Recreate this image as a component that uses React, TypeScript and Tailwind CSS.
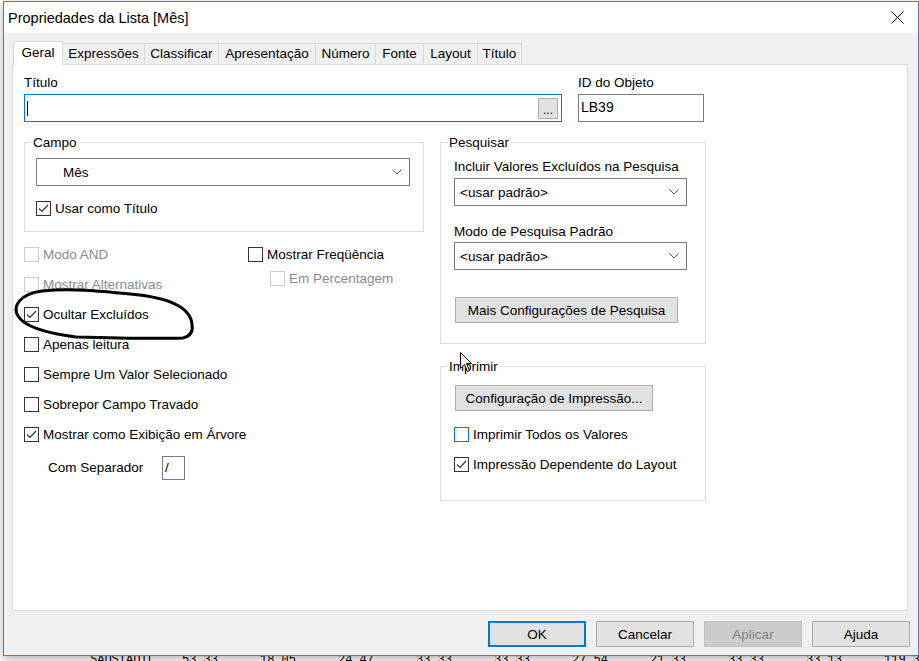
import React from "react";

const font = { fontFamily: '"Liberation Sans", Arial, sans-serif' };

const tabs = [
  { label: "Geral", w: "w-[50px]", active: true },
  { label: "Expressões", w: "w-[82px]" },
  { label: "Classificar", w: "w-[74px]" },
  { label: "Apresentação", w: "w-[97px]" },
  { label: "Número", w: "w-[60px]" },
  { label: "Fonte", w: "w-[48px]" },
  { label: "Layout", w: "w-[54px]" },
  { label: "Título", w: "w-[44px]" },
];

const desktopNumbers = ["53.33", "18.05", "24.47", "33.33", "33.33", "27.54", "21.33", "33.33", "33.13", "119.35"];

function Check({ checked, disabled, focus }: { checked?: boolean; disabled?: boolean; focus?: boolean }) {
  const border = disabled ? "border-[#cccccc]" : focus ? "border-[#0078d7]" : "border-[#333333]";
  return (
    <span className={`w-[15px] h-[15px] shrink-0 border bg-white flex items-center justify-center ${border}`}>
      {checked && (
        <svg width="13" height="13" viewBox="0 0 13 13">
          <polyline points="2,6.5 5,9.5 11,3" fill="none" stroke="#333" strokeWidth="1.2" />
        </svg>
      )}
    </span>
  );
}

function CheckRow({
  label,
  checked,
  disabled,
  focus,
  className = "",
}: {
  label: string;
  checked?: boolean;
  disabled?: boolean;
  focus?: boolean;
  className?: string;
}) {
  return (
    <div className={`flex items-center gap-[4px] ${className}`}>
      <Check checked={checked} disabled={disabled} focus={focus} />
      <span
        className={`leading-[16px] whitespace-nowrap translate-y-[1px] ${disabled ? "text-[#8a8a8a]" : "text-black"}`}
      >
        {label}
      </span>
    </div>
  );
}

function Combo({ value, className = "" }: { value: string; className?: string }) {
  return (
    <div className={`h-[28px] border border-[#7a7a7a] bg-white flex items-center justify-between pr-[7px] ${className}`}>
      <span className="leading-[16px] translate-y-[1px]">{value}</span>
      <svg width="10" height="6" viewBox="0 0 10 6">
        <polyline points="0.5,0.5 5,5 9.5,0.5" fill="none" stroke="#606060" strokeWidth="1" />
      </svg>
    </div>
  );
}

function WinButton({ label, className = "" }: { label: string; className?: string }) {
  return (
    <button className={`h-[26px] bg-[#e1e1e1] border border-[#adadad] text-black leading-[16px] ${className}`}>
      <span className="inline-block translate-y-[1px]">{label}</span>
    </button>
  );
}

function Group({ title, className = "", children }: { title: string; className?: string; children: React.ReactNode }) {
  return (
    <fieldset className={`border border-[#dcdcdc] ${className}`}>
      <legend className="ml-[6px] px-[2px] leading-[16px]">
        <span className="inline-block translate-y-[1px]">{title}</span>
      </legend>
      {children}
    </fieldset>
  );
}

export default function App() {
  return (
    <div className="relative w-[919px] h-[661px] overflow-hidden bg-white text-[13.5px] text-black" style={font}>
      {/* desktop content behind the dialog */}
      <div
        className="absolute left-[90px] top-[654px] flex text-[12px] leading-[12px] text-black"
        style={{ fontFamily: '"Liberation Mono", monospace' }}
      >
        <span className="w-[92px]">SADSTADIL</span>
        {desktopNumbers.map((n, i) => (
          <span key={i} className="w-[78px]">{n}</span>
        ))}
      </div>

      {/* dialog window */}
      <div className="absolute left-[3px] top-[1px] w-[916px] h-[655px] border border-[#1c8ee0] bg-[#f0f0f0] flex flex-col shadow-[0_3px_8px_rgba(0,0,0,0.3)]">
        {/* title bar */}
        <div className="h-[31px] bg-white flex items-center justify-between pl-[4px] pr-[14px]">
          <span className="text-[14.5px] translate-y-[1px]">Propriedades da Lista [Mês]</span>
          <svg width="13" height="13" viewBox="0 0 13 13">
            <path d="M0.5 0.5 L12.5 12.5 M12.5 0.5 L0.5 12.5" stroke="#000" strokeWidth="1" />
          </svg>
        </div>

        <div className="flex-1 flex flex-col pl-[8px] pt-[8px]">
          {/* tabs */}
          <div className="flex items-end h-[23px] ml-[1px]">
            {tabs.map((t) =>
              t.active ? (
                <div
                  key={t.label}
                  className={`${t.w} h-[24px] -mb-[1px] relative z-10 bg-white border border-b-0 border-[#d9d9d9] flex items-center justify-center pb-[1px]`}
                >
                  {t.label}
                </div>
              ) : (
                <div
                  key={t.label}
                  className={`${t.w} h-[21px] bg-[#f0f0f0] border-t border-r border-[#d9d9d9] flex items-center justify-center pt-[1px]`}
                >
                  {t.label}
                </div>
              )
            )}
          </div>

          {/* tab panel */}
          <div className="relative w-[896px] h-[547px] bg-white border border-[#d9d9d9] pl-[11px] pt-[9px]">
            {/* row 1 */}
            <div className="flex gap-[16px]">
              <div className="flex flex-col gap-[4px] w-[538px]">
                <span className="leading-[16px] translate-y-[1px]">Título</span>
                <div className="h-[28px] border border-[#0078d7] bg-white flex items-center justify-between pl-[2px] pr-[3px]">
                  <span className="w-[1px] h-[15px] bg-black" />
                  <span className="w-[20px] h-[21px] bg-[#e1e1e1] border border-[#adadad] flex items-end justify-center text-[12px] leading-[14px] pb-[1px]">
                    ...
                  </span>
                </div>
              </div>
              <div className="flex flex-col gap-[4px] w-[126px]">
                <span className="leading-[16px] translate-y-[1px]">ID do Objeto</span>
                <div className="h-[28px] border border-[#7a7a7a] bg-white pl-[2px] pt-[4px] leading-[16px] text-[14px]">
                  LB39
                </div>
              </div>
            </div>

            {/* row 2 */}
            <div className="flex gap-[16px] mt-[12px]">
              {/* left column */}
              <div className="w-[400px] flex flex-col">
                <Group title="Campo" className="w-[400px]">
                  <div className="pl-[11px] pt-[8px] pb-[15px]">
                    <Combo value="Mês" className="w-[374px] pl-[26px]" />
                    <CheckRow label="Usar como Título" checked className="mt-[14px] h-[16px]" />
                  </div>
                </Group>

                <div className="flex mt-[7px]">
                  <div className="w-[224px] flex flex-col">
                    <CheckRow label="Modo AND" disabled className="h-[30px]" />
                    <CheckRow label="Mostrar Alternativas" disabled className="h-[30px]" />
                  </div>
                  <div className="flex flex-col">
                    <CheckRow label="Mostrar Freqüência" className="h-[30px]" />
                    <CheckRow label="Em Percentagem" disabled className="h-[16px] mt-[1px] ml-[22px]" />
                  </div>
                </div>
                <CheckRow label="Ocultar Excluídos" checked className="h-[30px]" />
                <CheckRow label="Apenas leitura" className="h-[30px]" />
                <CheckRow label="Sempre Um Valor Selecionado" className="h-[30px]" />
                <CheckRow label="Sobrepor Campo Travado" className="h-[30px]" />
                <CheckRow label="Mostrar como Exibição em Árvore" checked className="h-[30px]" />
                <div className="flex items-center mt-[7px] pl-[24px]">
                  <span className="w-[114px] leading-[16px]">Com Separador</span>
                  <div className="w-[23px] h-[24px] border border-[#7a7a7a] bg-white pl-[2px] flex items-center">/</div>
                </div>
              </div>

              {/* right column */}
              <div className="w-[266px] flex flex-col">
                <Group title="Pesquisar" className="w-[266px]">
                  <div className="pl-[13px] pt-[8px] pb-[20px] flex flex-col">
                    <span className="leading-[16px] translate-y-[1px]">Incluir Valores Excluídos na Pesquisa</span>
                    <Combo value="<usar padrão>" className="w-[233px] pl-[5px] mt-[4px]" />
                    <span className="leading-[16px] mt-[17px] translate-y-[1px]">Modo de Pesquisa Padrão</span>
                    <Combo value="<usar padrão>" className="w-[233px] pl-[5px] mt-[3px]" />
                    <WinButton label="Mais Configurações de Pesquisa" className="w-[223px] ml-[1px] mt-[27px]" />
                  </div>
                </Group>
                <Group title="Imprimir" className="w-[266px] mt-[14px]">
                  <div className="pl-[13px] pt-[11px] pb-[28px] flex flex-col">
                    <WinButton label="Configuração de Impressão..." className="w-[198px] ml-[1px]" />
                    <CheckRow label="Imprimir Todos os Valores" focus className="h-[16px] mt-[15px]" />
                    <CheckRow label="Impressão Dependente do Layout" checked className="h-[16px] mt-[14px]" />
                  </div>
                </Group>
              </div>
            </div>
          </div>

          {/* bottom buttons */}
          <div className="flex justify-end gap-[10px] pr-[8px] mt-[10px]">
            <button className="w-[98px] h-[26px] bg-[#e1e1e1] border-2 border-[#0078d7] leading-[16px]">
              <span className="inline-block translate-y-[1px]">OK</span>
            </button>
            <WinButton label="Cancelar" className="w-[98px]" />
            <button className="w-[98px] h-[26px] bg-[#cccccc] border border-[#bfbfbf] text-[#838383] leading-[16px]">
              <span className="inline-block translate-y-[1px]">Aplicar</span>
            </button>
            <WinButton label="Ajuda" className="w-[98px]" />
          </div>
        </div>
      </div>

      {/* hand-drawn annotation */}
      <svg className="absolute left-0 top-0 pointer-events-none" width="919" height="661">
        <path
          d="M192 324 C190 306 165 297 130 294 C100 291 70 288 42 291 C20 294 12 306 18 316 C24 326 45 333 76 337 C110 338 150 339 183 338 C192 336 193 330 192 324"
          fill="none"
          stroke="#000"
          strokeWidth="3"
          strokeLinecap="round"
        />
      </svg>

      {/* mouse cursor */}
      <svg className="absolute left-[460px] top-[352px] pointer-events-none" width="13" height="21" viewBox="0 0 13 21">
        <path d="M0.5 0.5 L0.5 16.5 L4.5 12.5 L7.5 19.5 L9.5 18.5 L6.5 11.5 L11.5 11.5 Z" fill="#fff" stroke="#000" strokeWidth="1" />
      </svg>
    </div>
  );
}
